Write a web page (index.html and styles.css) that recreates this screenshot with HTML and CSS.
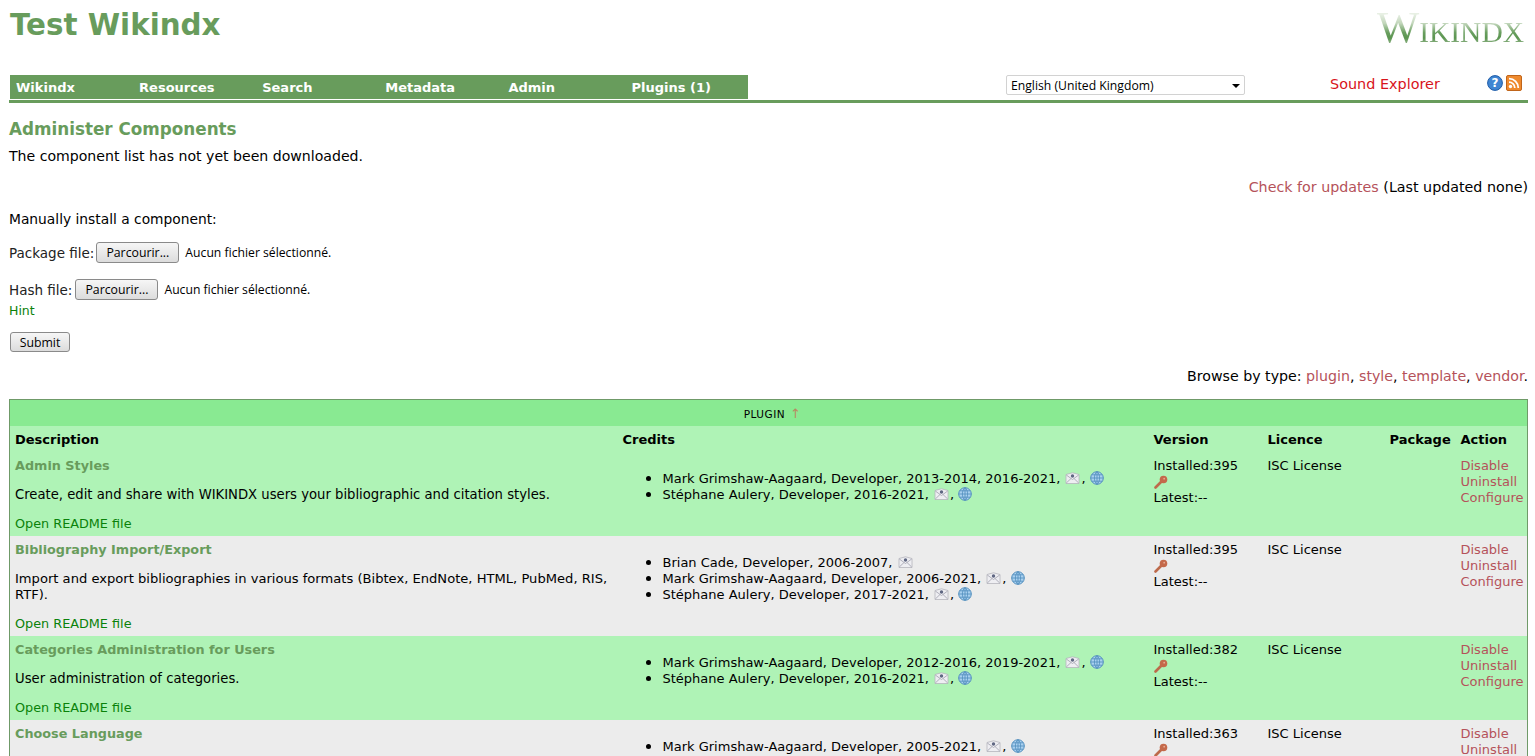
FILE: index.html
```html
<!DOCTYPE html>
<html lang="en">
<head>
<meta charset="utf-8">
<title>Test Wikindx</title>
<link rel="stylesheet" href="styles.css">
</head>
<body>
<svg class="defs" width="0" height="0" aria-hidden="true">
  <symbol id="mail" viewBox="0 0 14 12">
    <path d="M.5 2.500 L7 .8 L13.500 2.500 V11.500 H.5Z" fill="#eeeef2" stroke="#b5b5bd" stroke-width=".8"/>
    <path d="M.8 11 L5.500 6.500 M13.200 11 L8.500 6.500 M.8 3 L7 7.500 L13.200 3" fill="none" stroke="#a8a8b4" stroke-width=".9"/>
    <circle cx="7" cy="4" r="1.700" fill="#5f6782"/>
  </symbol>
  <symbol id="globe" viewBox="0 0 14 14">
    <circle cx="7" cy="7" r="6.300" fill="#a9d0ef" stroke="#4f8dbd"/>
    <path d="M.8 7 H13.200 M1.800 3.800 H12.200 M1.800 10.200 H12.200 M7 .7 V13.300 M7 .7 C3.500 3.500 3.500 10.500 7 13.300 M7 .7 C10.500 3.500 10.500 10.500 7 13.300" fill="none" stroke="#4f8dbd" stroke-width=".8"/>
  </symbol>
  <symbol id="key" viewBox="0 0 14 14">
    <path d="M1.500 12.500 L7 7" stroke="#bd6a4b" stroke-width="2.600" stroke-linecap="round"/>
    <circle cx="9.500" cy="4.500" r="3.800" fill="#c4694a"/>
    <circle cx="10.200" cy="3.700" r=".9" fill="#e9ad94"/>
  </symbol>
</svg>

<header class="masthead">
  <h1 class="site-title">Test Wikindx</h1>
  <div class="logo"><span class="logo-big">W</span>IKINDX</div>
</header>

<div class="menubar">
  <nav class="nav">
    <a class="nav-item">Wikindx</a>
    <a class="nav-item">Resources</a>
    <a class="nav-item">Search</a>
    <a class="nav-item">Metadata</a>
    <a class="nav-item">Admin</a>
    <a class="nav-item">Plugins (1)</a>
  </nav>
  <span class="lang-wrap"><select class="lang"><option>English (United Kingdom)</option></select></span>
  <a class="sound">Sound Explorer</a>
  <div class="tools">
    <svg class="tool" viewBox="0 0 16 16" aria-label="Help">
      <circle cx="8" cy="8" r="7.400" fill="#3f85d2" stroke="#1f5ca8"/>
      <text x="8" y="12" class="help-q">?</text>
    </svg>
    <svg class="tool" viewBox="0 0 16 16" aria-label="RSS">
      <rect x=".5" y=".5" width="15" height="15" rx="1.500" fill="#ef8a2e" stroke="#c0651a"/>
      <circle cx="4.500" cy="11.500" r="1.700" fill="#fff"/>
      <path d="M3 7.200a5.800 5.800 0 0 1 5.800 5.800M3 3.700a9.300 9.300 0 0 1 9.300 9.300" fill="none" stroke="#fff" stroke-width="1.800"/>
    </svg>
  </div>
</div>

<main class="content">
  <h2 class="page-title">Administer Components</h2>
  <p class="intro">The component list has not yet been downloaded.</p>
  <p class="updates"><a class="link">Check for updates</a> (Last updated none)</p>
  <p class="manual">Manually install a component:</p>
  <p class="file-row">Package file:<button class="btn">Parcourir...</button><span class="no-file">Aucun fichier sélectionné.</span></p>
  <p class="file-row">Hash file:<button class="btn">Parcourir...</button><span class="no-file">Aucun fichier sélectionné.</span></p>
  <p class="hint"><a class="green">Hint</a></p>
  <p class="submit-row"><button class="btn btn-submit">Submit</button></p>
  <p class="browse">Browse by type: <a class="link">plugin</a>, <a class="link">style</a>, <a class="link">template</a>, <a class="link">vendor</a>.</p>

  <table class="components">
    <colgroup>
      <col class="c-desc"><col class="c-credits"><col class="c-version"><col class="c-licence"><col class="c-package"><col class="c-action">
    </colgroup>
    <thead>
      <tr class="type-row"><th colspan="6">PLUGIN <span class="arrow">↑</span></th></tr>
      <tr class="head-row"><th>Description</th><th>Credits</th><th>Version</th><th>Licence</th><th>Package</th><th>Action</th></tr>
    </thead>
    <tbody>
      <tr class="row-a">
        <td class="desc"><div class="name">Admin Styles</div><p>Create, edit and share with WIKINDX users your bibliographic and citation styles.</p><a class="green">Open README file</a></td>
        <td><ul class="credits">
          <li>Mark Grimshaw-Aagaard, Developer, 2013-2014, 2016-2021, <svg class="ic ic-m"><use href="#mail"/></svg>, <svg class="ic"><use href="#globe"/></svg></li>
          <li>Stéphane Aulery, Developer, 2016-2021, <svg class="ic ic-m"><use href="#mail"/></svg>, <svg class="ic"><use href="#globe"/></svg></li>
        </ul></td>
        <td class="version">Installed:395<br><svg class="ic key"><use href="#key"/></svg><br>Latest:--</td>
        <td>ISC License</td><td></td>
        <td class="actions"><a class="link">Disable</a><a class="link">Uninstall</a><a class="link">Configure</a></td>
      </tr>
      <tr class="row-b">
        <td class="desc"><div class="name">Bibliography Import/Export</div><p>Import and export bibliographies in various formats (Bibtex, EndNote, HTML, PubMed, RIS, RTF).</p><a class="green">Open README file</a></td>
        <td><ul class="credits">
          <li>Brian Cade, Developer, 2006-2007, <svg class="ic ic-m"><use href="#mail"/></svg></li>
          <li>Mark Grimshaw-Aagaard, Developer, 2006-2021, <svg class="ic ic-m"><use href="#mail"/></svg>, <svg class="ic"><use href="#globe"/></svg></li>
          <li>Stéphane Aulery, Developer, 2017-2021, <svg class="ic ic-m"><use href="#mail"/></svg>, <svg class="ic"><use href="#globe"/></svg></li>
        </ul></td>
        <td class="version">Installed:395<br><svg class="ic key"><use href="#key"/></svg><br>Latest:--</td>
        <td>ISC License</td><td></td>
        <td class="actions"><a class="link">Disable</a><a class="link">Uninstall</a><a class="link">Configure</a></td>
      </tr>
      <tr class="row-a">
        <td class="desc"><div class="name">Categories Administration for Users</div><p>User administration of categories.</p><a class="green">Open README file</a></td>
        <td><ul class="credits">
          <li>Mark Grimshaw-Aagaard, Developer, 2012-2016, 2019-2021, <svg class="ic ic-m"><use href="#mail"/></svg>, <svg class="ic"><use href="#globe"/></svg></li>
          <li>Stéphane Aulery, Developer, 2016-2021, <svg class="ic ic-m"><use href="#mail"/></svg>, <svg class="ic"><use href="#globe"/></svg></li>
        </ul></td>
        <td class="version">Installed:382<br><svg class="ic key"><use href="#key"/></svg><br>Latest:--</td>
        <td>ISC License</td><td></td>
        <td class="actions"><a class="link">Disable</a><a class="link">Uninstall</a><a class="link">Configure</a></td>
      </tr>
      <tr class="row-b">
        <td class="desc"><div class="name">Choose Language</div></td>
        <td><ul class="credits">
          <li>Mark Grimshaw-Aagaard, Developer, 2005-2021, <svg class="ic ic-m"><use href="#mail"/></svg>, <svg class="ic"><use href="#globe"/></svg></li>
        </ul></td>
        <td class="version">Installed:363<br><svg class="ic key"><use href="#key"/></svg></td>
        <td>ISC License</td><td></td>
        <td class="actions"><a class="link">Disable</a><a class="link">Uninstall</a></td>
      </tr>
    </tbody>
  </table>
</main>
</body>
</html>
```

FILE: styles.css
```css
html { overflow: hidden; height: 756px; }
body {
  margin: 0;
  padding: 0 7px 0 9px;
  font-family: "DejaVu Sans", Verdana, sans-serif;
  font-size: 14px;
  line-height: 16px;
  color: #000;
  background: #fff;
}
.defs { position: absolute; }
p { margin: 0; }
a { cursor: pointer; }

.masthead {
  display: flex;
  justify-content: space-between;
  height: 75px;
  padding-left: 1px;
}
.site-title {
  margin: 7px 0 0;
  font-family: "DejaVu Sans", sans-serif;
  font-size: 29.350px;
  line-height: 36px;
  font-weight: 700;
  color: #689c5c;
}
.logo {
  align-self: flex-start;
  margin: 4px 4px 0 0;
  font-family: "Liberation Serif", serif;
  font-size: 29.500px;
  line-height: 46px;
  height: 46px;
  color: transparent;
  background: linear-gradient(180deg, #e8f0e4 22%, #c2d6bb 42%, #6a9f60 62%, #5b9550 74%, #86ad7d 84%, #bcd0b6 94%);
  -webkit-background-clip: text;
  background-clip: text;
}
.logo-big { font-size: 45px; }

.menubar {
  display: flex;
  align-items: flex-start;
  height: 25px;
  border-bottom: 3px solid #689c5c;
}
.nav {
  display: flex;
  width: 738px;
  height: 24px;
  margin-left: 1px;
  background: #689c5c;
}
.nav-item {
  width: 123.100px;
  padding-left: 6px;
  box-sizing: border-box;
  flex: none;
  font-size: 13px;
  line-height: 25px;
  font-weight: 700;
  color: #fff;
}
.lang-wrap {
  position: relative;
  display: block;
  flex: none;
  width: 239px;
  height: 20px;
  margin-left: 258px;
}
.lang-wrap::after {
  content: "";
  position: absolute;
  right: 5px;
  top: 9px;
  border-left: 4px solid transparent;
  border-right: 4px solid transparent;
  border-top: 4px solid #000;
}
.lang {
  display: block;
  width: 239px;
  height: 20px;
  margin: 0;
  padding: 0 0 0 4px;
  appearance: none;
  font-family: "Open Sans", sans-serif;
  font-size: 12.200px;
  color: #000;
  background: #fff;
  border: 1px solid #d2d2d2;
  border-radius: 2px;
}
.sound {
  margin-left: 85px;
  width: 157px;
  flex: none;
  line-height: 18px;
  font-size: 14.400px;
  color: #d8141c;
}
.tools { display: flex; gap: 3px; }
.tool { width: 16px; height: 16px; display: block; }
.help-q { font: 700 12px "DejaVu Sans", sans-serif; fill: #fff; text-anchor: middle; }

.content { padding-top: 16px; }
.page-title {
  margin: 0;
  font-size: 16.800px;
  line-height: 20px;
  font-weight: 700;
  color: #689c5c;
}
.intro { margin-top: 9px; font-size: 14.100px; }
.updates { margin-top: 15px; font-size: 14.250px; text-align: right; }
.manual { margin-top: 16px; font-size: 13.800px; }
.file-row {
  display: flex;
  align-items: center;
  height: 21px;
  margin-top: 15px;
  font-size: 13.500px;
  color: #222;
}
.file-row + .file-row { margin-top: 16px; }
.file-row + .file-row .btn { margin-left: 3px; }
.no-file { margin-left: 6px; font-family: "Open Sans", sans-serif; font-size: 12.200px; color: #000; }
.btn {
  height: 21px;
  width: 83px;
  margin-left: 2px;
  padding: 0;
  font-family: "Open Sans", sans-serif;
  font-size: 12.300px;
  color: #000;
  background: linear-gradient(#f6f6f6, #dcdcdc);
  border: 1px solid #8a8a8a;
  border-radius: 3px;
}
.btn-submit { display: block; width: 60px; height: 20px; margin-left: 1px; }
.hint { margin-top: 3px; font-size: 12.500px; }
.green { color: #0a820a; }
.link { color: #b5525a; }
.submit-row { margin-top: 13px; }
.browse { margin-top: 16px; font-size: 14.200px; text-align: right; }

.components {
  width: 100%;
  margin-top: 15px;
  border-collapse: collapse;
  border: 1px solid #6f9a68;
  table-layout: fixed;
  font-size: 13px;
}
.c-desc { width: 608px; }
.c-credits { width: 531px; }
.c-version { width: 114px; }
.c-licence { width: 122px; }
.c-package { width: 71px; }
.type-row th {
  height: 26px;
  padding: 2px 0 0 8px;
  box-sizing: border-box;
  background: #89ea92;
  font-size: 10.500px;
  letter-spacing: .5px;
  font-weight: 400;
  text-align: center;
}
.arrow { margin-left: 1px; color: #b98a62; font-size: 13px; }
.head-row th {
  height: 26px;
  box-sizing: border-box;
  padding: 2px 6px 0 5px;
  text-align: left;
  background: #aff3b6;
  font-weight: 700;
}
td { padding: 6px 6px 4px 5px; vertical-align: top; }
.row-a td { background: #aff3b6; }
.row-b td { background: #ececec; }
.name { font-size: 12.800px; font-weight: 700; color: #689c5c; }
.desc p { margin: 13px 0; font-size: 13.100px; }
.row-a .desc p { font-size: 13.200px; }
.desc .green { font-size: 12.800px; }
.credits { margin: 11px 0 0; padding: 0 0 0 40px; }
.credits li { height: 16px; white-space: nowrap; }
.credits li::marker { font-size: 17px; }
.ic { width: 14px; height: 14px; vertical-align: -2px; }
.ic-m { width: 17px; height: 12px; vertical-align: -1px; }
.key { display: inline-block; vertical-align: top; margin-top: 1px; }
.actions a { display: block; }
```
